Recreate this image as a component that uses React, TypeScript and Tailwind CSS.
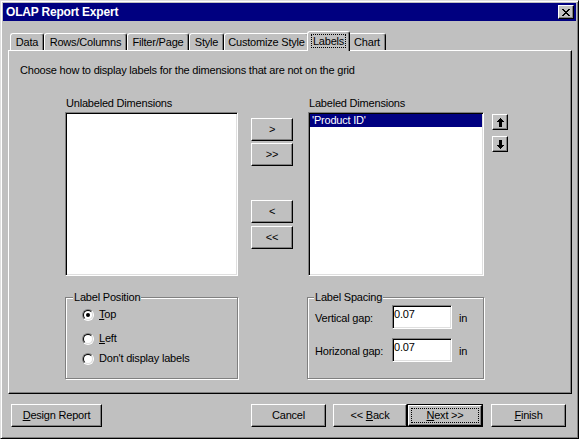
import React from "react";

const raised =
  "bg-[#c0c0c0] border border-t-white border-l-white border-r-black border-b-black shadow-[inset_-1px_-1px_0_#808080]";
const sunken =
  "bg-white border border-t-[#808080] border-l-[#808080] border-r-white border-b-white shadow-[inset_1px_1px_0_#000,inset_-1px_-1px_0_#dfdfdf]";
const etched =
  "relative border border-[#808080] shadow-[inset_1px_1px_0_white,1px_1px_0_white]";

function Btn({ className, children }: { className: string; children?: React.ReactNode }) {
  return <div className={`${raised} flex items-center justify-center ${className}`}>{children}</div>;
}

function UpArrow({ className = "" }: { className?: string }) {
  return (
    <svg width="7" height="9" viewBox="0 0 7 9" shapeRendering="crispEdges" className={className}>
      <path d="M3 0h1v1h1v1h1v1h1v1H5v5H2V4H0V3h1V2h1V1h1z" fill="black" />
    </svg>
  );
}

function CloseX() {
  const px: [number, number, number][] = [
    [0, 0, 2], [6, 0, 2],
    [1, 1, 2], [5, 1, 2],
    [2, 2, 4],
    [3, 3, 2],
    [2, 4, 4],
    [1, 5, 2], [5, 5, 2],
    [0, 6, 2], [6, 6, 2],
  ];
  return (
    <svg width="8" height="7" viewBox="0 0 8 7" shapeRendering="crispEdges">
      {px.map(([x, y, w], i) => (
        <rect key={i} x={x} y={y} width={w} height={1} fill="black" />
      ))}
    </svg>
  );
}

function Radio({ checked }: { checked?: boolean }) {
  return (
    <div className="w-[12px] h-[12px] rounded-full border border-t-[#808080] border-l-[#808080] border-b-white border-r-white shrink-0">
      <div className="w-full h-full rounded-full border border-t-black border-l-black border-b-[#dfdfdf] border-r-[#dfdfdf] bg-white flex items-center justify-center">
        {checked && <div className="w-[4px] h-[4px] rounded-full bg-black" />}
      </div>
    </div>
  );
}

function Tab({ className, children }: { className: string; children: React.ReactNode }) {
  return (
    <div
      className={`h-[17px] flex items-center justify-center border-t border-l border-r border-t-white border-l-white border-r-black rounded-t-[3px] shadow-[inset_-1px_0_0_#808080] ${className}`}
    >
      {children}
    </div>
  );
}

export default function App() {
  return (
    <div className="w-[579px] h-[439px] bg-[#c0c0c0] text-black text-[11px] leading-[13px] tracking-[-0.2px] font-['Liberation_Sans',Arial,sans-serif] border border-t-[#dfdfdf] border-l-[#dfdfdf] border-r-black border-b-black shadow-[inset_1px_1px_0_white,inset_-1px_-1px_0_#808080] p-[2px] flex flex-col">
      {/* Title bar */}
      <div className="h-[18px] bg-[#000080] flex items-center pl-[3px] pr-[2px]">
        <span className="text-white font-bold text-[12px]">OLAP Report Expert</span>
        <Btn className="ml-auto w-[16px] h-[14px]">
          <CloseX />
        </Btn>
      </div>

      {/* Tabs */}
      <div className="mt-[10px] h-[19px] flex items-end pl-[7px]">
        <Tab className="w-[34px]">Data</Tab>
        <Tab className="w-[83px]">Rows/Columns</Tab>
        <Tab className="w-[62px]">Filter/Page</Tab>
        <Tab className="w-[35px]">Style</Tab>
        <Tab className="w-[85px]">Customize Style</Tab>
        <div className="relative z-10 w-[43px] h-[20px] -mx-[2px] -mb-[1px] bg-[#c0c0c0] flex items-center justify-center pb-[1px] border-t border-l border-r border-t-white border-l-white border-r-black rounded-t-[3px] shadow-[inset_-1px_0_0_#808080]">
          <span className="border border-dotted border-black px-[1px] leading-[12px]">Labels</span>
        </div>
        <Tab className="w-[38px]">Chart</Tab>
      </div>

      {/* Panel */}
      <div className="ml-[5px] w-[564px] h-[344px] border border-t-white border-l-white border-r-black border-b-black shadow-[inset_-1px_-1px_0_#808080] flex flex-col">
        <p className="mt-[13px] ml-[11px]">
          Choose how to display labels for the dimensions that are not on the grid
        </p>

        <div className="mt-[20px] flex items-start">
          {/* Unlabeled */}
          <div className="ml-[56px] w-[173px] flex flex-col">
            <div className="pl-[1px]">Unlabeled Dimensions</div>
            <div className={`${sunken} mt-[2px] h-[164px]`} />
          </div>

          {/* Move buttons */}
          <div className="ml-[13px] w-[42px] pt-[21px] flex flex-col">
            <Btn className="h-[23px]">&gt;</Btn>
            <Btn className="h-[23px] mt-[2px]">&gt;&gt;</Btn>
            <Btn className="h-[23px] mt-[34px]">&lt;</Btn>
            <Btn className="h-[23px] mt-[3px]">&lt;&lt;</Btn>
          </div>

          {/* Labeled */}
          <div className="ml-[15px] w-[176px] flex flex-col">
            <div className="pl-[1px]">Labeled Dimensions</div>
            <div className={`${sunken} mt-[2px] h-[164px] p-[1px]`}>
              <div className="h-[13px] bg-[#000080] text-white pl-[2px]">'Product ID'</div>
            </div>
          </div>

          {/* Up / down */}
          <div className="ml-[8px] pt-[17px] flex flex-col">
            <Btn className="w-[16px] h-[16px]">
              <UpArrow />
            </Btn>
            <Btn className="w-[16px] h-[16px] mt-[6px]">
              <UpArrow className="rotate-180" />
            </Btn>
          </div>
        </div>

        {/* Group boxes */}
        <div className="mt-[21px] flex items-start">
          <div className={`${etched} ml-[56px] w-[173px] h-[82px] flex flex-col pl-[16px]`}>
            <span className="absolute -top-[7px] left-[7px] px-[1px] bg-[#c0c0c0]">Label Position</span>
            <div className="mt-[10px] h-[13px] flex items-center gap-[5px]">
              <Radio checked />
              <span>
                <span className="underline">T</span>op
              </span>
            </div>
            <div className="mt-[11px] h-[13px] flex items-center gap-[5px]">
              <Radio />
              <span>
                <span className="underline">L</span>eft
              </span>
            </div>
            <div className="mt-[7px] h-[13px] flex items-center gap-[5px]">
              <Radio />
              <span>Don't display labels</span>
            </div>
          </div>

          <div className={`${etched} ml-[69px] w-[177px] h-[82px] flex flex-col pl-[7px]`}>
            <span className="absolute -top-[7px] left-[6px] px-[1px] bg-[#c0c0c0]">Label Spacing</span>
            <div className="mt-[7px] flex items-center">
              <span className="w-[77px] pt-[3px]">Vertical gap:</span>
              <div className={`${sunken} w-[60px] h-[24px] pl-[1px] pt-[2px]`}>0.07</div>
              <span className="ml-[7px] pt-[3px]">in</span>
            </div>
            <div className="mt-[9px] flex items-center">
              <span className="w-[77px] pt-[3px]">Horizonal gap:</span>
              <div className={`${sunken} w-[60px] h-[24px] pl-[1px] pt-[2px]`}>0.07</div>
              <span className="ml-[7px] pt-[3px]">in</span>
            </div>
          </div>
        </div>
      </div>

      {/* Bottom buttons */}
      <div className="mt-[10px] h-[23px] flex items-start">
        <Btn className="ml-[8px] w-[91px] h-[23px]">
          <span>
            <span className="underline">D</span>esign Report
          </span>
        </Btn>
        <Btn className="ml-[149px] w-[75px] h-[23px]">Cancel</Btn>
        <Btn className="ml-[7px] w-[74px] h-[23px]">
          <span>
            &lt;&lt; <span className="underline">B</span>ack
          </span>
        </Btn>
        <div className="w-[76px] h-[23px] border border-black flex">
          <div className={`${raised} flex-1 flex p-[2px]`}>
            <div className="flex-1 border border-dotted border-black flex items-center justify-center">
              <span>
                <span className="underline">N</span>ext &gt;&gt;
              </span>
            </div>
          </div>
        </div>
        <Btn className="ml-[8px] w-[75px] h-[23px]">
          <span>
            <span className="underline">F</span>inish
          </span>
        </Btn>
      </div>
    </div>
  );
}
